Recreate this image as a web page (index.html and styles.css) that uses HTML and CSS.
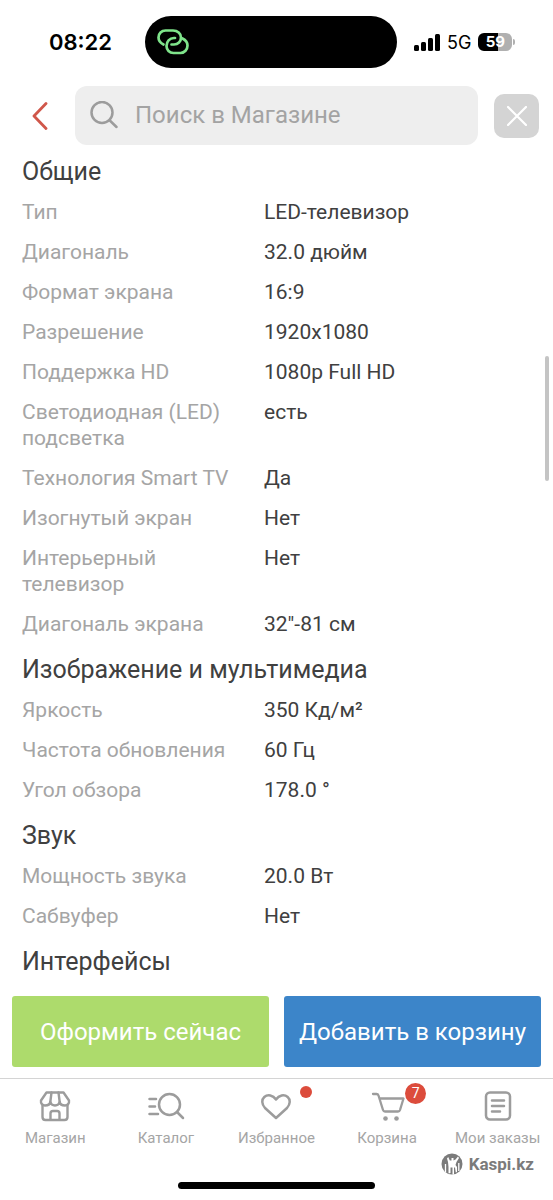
FILE: index.html
```html
<!DOCTYPE html>
<html lang="ru">
<head>
<meta charset="utf-8">
<meta name="viewport" content="width=device-width, initial-scale=1">
<title>Характеристики — Магазин</title>
<link rel="stylesheet" href="styles.css">
</head>
<body>
<div class="screen">
  <div class="status">
    <div class="status-time">08:22</div>
    <div class="island">
      <svg class="island-icon" viewBox="0 0 32 26" aria-hidden="true"><g fill="none" stroke="#7fe48b" stroke-width="2.700" stroke-linecap="round"><path d="M6.500 15.500C3.500 14 1.500 11.500 1.500 8.500C1.500 4.500 4.500 1.500 8.500 1.500H16C20.500 1.500 24 4.500 24 8.500C24 12.500 21 15.500 17 15.500H14.500"/><path d="M25.500 9.500C28.500 11 30.500 13.500 30.500 16.500C30.500 20.500 27.500 24 23.500 24H16.500C12.500 24 9.500 21 9.500 17C9.500 12.500 12.500 9 17 9H18"/></g></svg>
    </div>
    <div class="status-right">
      <svg class="signal" viewBox="0 0 26 17" aria-hidden="true"><rect x="0" y="11" width="5" height="6" rx="1.500"/><rect x="7" y="8" width="5" height="9" rx="1.500"/><rect x="14" y="4" width="5" height="13" rx="1.500"/><rect x="21" y="0" width="5" height="17" rx="1.500"/></svg>
      <span class="network">5G</span>
      <span class="battery">59</span>
      <span class="battery-tip"></span>
    </div>
  </div>

  <header class="header">
    <button class="back" type="button" aria-label="Назад"><svg viewBox="0 0 16 28" aria-hidden="true"><path d="M14 1.500L2 14L14 26.500" fill="none" stroke="#d0574a" stroke-width="2.800" stroke-linecap="round" stroke-linejoin="round"/></svg></button>
    <label class="search">
      <svg viewBox="0 0 28 28" aria-hidden="true"><g fill="none" stroke="#9c9c9c" stroke-width="2.500" stroke-linecap="round"><circle cx="12" cy="11.500" r="10.500"/><path d="M19.800 19.500L26.500 26"/></g></svg>
      <input class="search-input" type="search" placeholder="Поиск в Магазине" aria-label="Поиск в Магазине">
    </label>
    <button class="close" type="button" aria-label="Закрыть"><svg viewBox="0 0 20 20" aria-hidden="true"><path d="M1 1L19 19M19 1L1 19" stroke="#fff" stroke-width="2.200" stroke-linecap="round"/></svg></button>
  </header>

  <main class="specs">
    <h2 class="spec-title">Общие</h2>
    <dl class="spec-list">
      <div class="spec"><dt>Тип</dt><dd>LED-телевизор</dd></div>
      <div class="spec"><dt>Диагональ</dt><dd>32.0 дюйм</dd></div>
      <div class="spec"><dt>Формат экрана</dt><dd>16:9</dd></div>
      <div class="spec"><dt>Разрешение</dt><dd>1920x1080</dd></div>
      <div class="spec"><dt>Поддержка HD</dt><dd>1080p Full HD</dd></div>
      <div class="spec"><dt>Светодиодная (LED) подсветка</dt><dd>есть</dd></div>
      <div class="spec"><dt>Технология Smart TV</dt><dd>Да</dd></div>
      <div class="spec"><dt>Изогнутый экран</dt><dd>Нет</dd></div>
      <div class="spec"><dt>Интерьерный телевизор</dt><dd>Нет</dd></div>
      <div class="spec"><dt>Диагональ экрана</dt><dd>32"-81 см</dd></div>
    </dl>
    <h2 class="spec-title">Изображение и мультимедиа</h2>
    <dl class="spec-list">
      <div class="spec"><dt>Яркость</dt><dd>350 Кд/м²</dd></div>
      <div class="spec"><dt>Частота обновления</dt><dd>60 Гц</dd></div>
      <div class="spec"><dt>Угол обзора</dt><dd>178.0 °</dd></div>
    </dl>
    <h2 class="spec-title">Звук</h2>
    <dl class="spec-list">
      <div class="spec"><dt>Мощность звука</dt><dd>20.0 Вт</dd></div>
      <div class="spec"><dt>Сабвуфер</dt><dd>Нет</dd></div>
    </dl>
    <h2 class="spec-title">Интерфейсы</h2>
    <div class="scroll-thumb"></div>
  </main>

  <footer class="footer">
    <div class="actions">
      <button class="action action-buy" type="button">Оформить сейчас</button>
      <button class="action action-cart" type="button">Добавить в корзину</button>
    </div>
    <nav class="tabs">
      <a class="tab" href="#shop">
        <svg viewBox="0 0 32 32" aria-hidden="true"><g fill="none" stroke="#9c9c9c" stroke-width="2.400" stroke-linejoin="round" stroke-linecap="round"><path d="M7.500 2.500H24.500L30 10.500C30.500 13.500 28.500 15.500 26 15.500C23 15.500 21 14 20.700 12C20 14.500 18.500 15.500 16 15.500C13.500 15.500 12 14.500 11.300 12C11 14 9 15.500 6 15.500C3.500 15.500 1.500 13.500 2 10.500Z"/><path d="M12.500 2.500L11.300 12M19.500 2.500L20.700 12M3.500 15V27Q3.500 30 6.500 30H25.500Q28.500 30 28.500 27V15M11.500 30V23.500Q11.500 21 14 21H18Q20.500 21 20.500 23.500V30"/></g></svg>
        <span>Магазин</span>
      </a>
      <a class="tab" href="#catalog">
        <svg class="wide" viewBox="0 0 38 32" aria-hidden="true"><g fill="none" stroke="#9c9c9c" stroke-width="2.500" stroke-linecap="round"><circle cx="22.500" cy="14.500" r="10.500"/><path d="M30 22L36 28M2.500 9H9M2.500 16.500H8M2.500 24H11"/></g></svg>
        <span>Каталог</span>
      </a>
      <a class="tab" href="#favorites">
        <svg viewBox="0 0 32 32" aria-hidden="true"><path d="M16 28L5 18C1.500 14 1.500 9.500 4.300 7C7.800 4 13 5 16 9.500C19 5 24.200 4 27.700 7C30.500 9.500 30.500 14 27 18Z" fill="none" stroke="#9c9c9c" stroke-width="2.500" stroke-linejoin="round"/></svg>
        <i class="dot"></i>
        <span>Избранное</span>
      </a>
      <a class="tab" href="#cart">
        <svg class="wide" viewBox="0 0 38 32" aria-hidden="true"><path d="M5 4H8.500Q10 4 10.500 5.500L15 20Q15.500 21.500 17 21.500H30Q31.500 21.500 32 20L35.500 8.500H11.500" fill="none" stroke="#9c9c9c" stroke-width="2.300" stroke-linecap="round" stroke-linejoin="round"/><circle cx="17.500" cy="28.500" r="2.300" fill="#9c9c9c"/><circle cx="28.500" cy="28.500" r="2.300" fill="#9c9c9c"/></svg>
        <b class="count">7</b>
        <span>Корзина</span>
      </a>
      <a class="tab" href="#orders">
        <svg viewBox="0 0 32 32" aria-hidden="true"><g fill="none" stroke="#9c9c9c" stroke-width="2.500" stroke-linecap="round"><rect x="4" y="2.500" width="24" height="27" rx="4"/><path d="M10 10.500H22M10 16H22M10 21.500H18"/></g></svg>
        <span>Мои заказы</span>
      </a>
    </nav>
    <div class="brand">
      <svg viewBox="0 0 22 22" aria-hidden="true"><circle cx="11" cy="11" r="10.500" fill="#7b7b7b"/><path d="M7.200 4L8.800 7.500H10.500V5H12.500V7.500L14.500 6.500L17 3.500L18 5L15.500 9L14.500 12L16 14V19L14.800 19.500L14 14.500H13V21.500H11.500V14.500H9.500V20L7.500 20.500V14L7 9L6 5.500Z" fill="#fff"/><path d="M4.500 11V19M17.800 10V18" stroke="#fff" stroke-width="1.300"/></svg>
      <span>Kaspi.kz</span>
    </div>
    <div class="home-bar"></div>
  </footer>
</div>
</body>
</html>
```
FILE: styles.css
```css
* { box-sizing: border-box; }
body {
  margin: 0;
  background: #fff;
  color: #404040;
  font-family: Roboto, "Noto Sans", sans-serif;
  font-size: 20px;
}
button, input { font: inherit; border: 0; padding: 0; margin: 0; }
svg { display: block; }

.screen { display: flex; flex-direction: column; min-height: 100vh; }

.status {
  display: grid;
  grid-template-columns: 145fr 252px 156fr;
  align-items: center;
  padding: 16px 0 18px;
  color: #000;
  font-family: Inter, "Liberation Sans", sans-serif;
}
.status-time { padding-left: 49px; font-size: 22px; font-weight: 600; }
.island { display: flex; align-items: center; height: 52px; padding-left: 12px; border-radius: 26px; background: #000; }
.island-icon { width: 32px; height: 26px; }
.status-right { display: flex; align-items: center; padding-left: 17px; }
.signal { width: 26px; height: 17px; }
.network { margin: 0 7px; font-size: 18px; font-weight: 400; }
.battery {
  width: 34px;
  border-radius: 6px;
  background: linear-gradient(90deg, #000 59%, #b0b0b0 59%);
  color: #fff;
  font-size: 15px;
  font-weight: 700;
  line-height: 18px;
  text-align: center;
}
.battery-tip { width: 2px; height: 6px; margin-left: 1px; border-radius: 0 2px 2px 0; background: #b0b0b0; }

.header { display: flex; align-items: center; gap: 16px; padding: 0 14px 0 20px; }
.back { display: flex; justify-content: center; width: 39px; background: none; }
.back svg { width: 16px; height: 28px; }
.search {
  flex: 1;
  display: flex;
  align-items: center;
  gap: 17px;
  height: 59px;
  padding: 0 15px 2px;
  border-radius: 12px;
  background: #eee;
}
.search svg { width: 28px; height: 28px; }
.search-input { flex: 1; min-width: 0; background: none; font-size: 24px; outline: 0; }
.search-input::placeholder { color: #a3a3a3; opacity: 1; }
.close { display: flex; align-items: center; justify-content: center; width: 45px; height: 44px; border-radius: 10px; background: #d4d4d4; }
.close svg { width: 20px; height: 20px; }

.specs { position: relative; padding: 10px 22px 16px; }
.spec-title { margin: 0; font-size: 25px; font-weight: 400; line-height: 34px; }
.spec-list { margin: 0 0 9px; padding-top: 3px; }
.spec { display: grid; grid-template-columns: 226fr 267fr; column-gap: 16px; padding: 7px 0; font-size: 21px; line-height: 26px; }
.spec dt { color: #a5a5a5; }
.spec dd { margin: 0; }
.scroll-thumb { position: absolute; top: 211px; right: 4px; width: 4px; height: 125px; border-radius: 2px; background: #c4c4c4; }

.footer { position: relative; margin-top: auto; }
.actions { display: grid; grid-template-columns: 1fr 1fr; gap: 15px; padding: 0 12px 11px; }
.action { height: 71px; border-radius: 3px; color: #fff; font-size: 24px; }
.action-buy { background: #addb6c; }
.action-cart { background: #3c85c9; }
.tabs { display: grid; grid-template-columns: repeat(5, 1fr); padding-top: 11px; border-top: 1px solid #d4d4d4; }
.tab {
  position: relative;
  display: flex;
  flex-direction: column;
  align-items: center;
  gap: 6px;
  color: #a5a5a5;
  font-size: 15px;
  line-height: 20px;
  text-decoration: none;
  white-space: nowrap;
}
.tab svg { width: 32px; height: 32px; }
.tab .wide { width: 38px; }
.dot { position: absolute; top: -4px; left: calc(50% + 24px); width: 12px; height: 12px; border-radius: 50%; background: #dc4c3c; }
.count {
  position: absolute;
  top: -7px;
  left: calc(50% + 18px);
  width: 21px;
  height: 21px;
  border-radius: 50%;
  background: #dc4c3c;
  color: #fff;
  font-size: 14px;
  font-weight: 400;
  line-height: 21px;
  text-align: center;
}
.brand { display: flex; align-items: center; justify-content: flex-end; gap: 6px; padding: 4px 19px 0 0; color: #7b7b7b; font-size: 17px; font-weight: 700; line-height: 24px; }
.brand svg { width: 22px; height: 22px; }
.home-bar { width: 197px; height: 7px; margin: 6px auto 11px; border-radius: 4px; background: #000; }
```
